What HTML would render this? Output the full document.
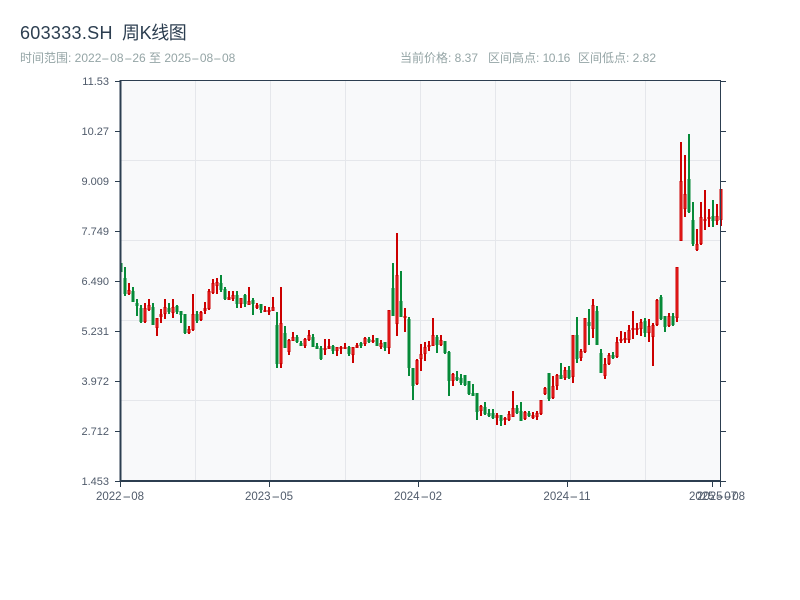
<!DOCTYPE html>
<html><head><meta charset="utf-8"><style>
html,body{margin:0;padding:0;background:#fff;width:800px;height:600px;overflow:hidden}
svg{position:absolute;left:0;top:0}
.t{position:absolute;white-space:pre;font-family:"Liberation Sans","WenQuanYi Zen Hei",sans-serif;line-height:14px}
.s{font-size:12px;color:#95a5a6;top:51px}
.s i{display:inline-block;font-style:normal;width:8.8px;text-align:center;transform:scaleX(2.1)}
.x{font-size:11.5px;color:#505b6b;top:490px;width:60px;text-align:center}
.x i{display:inline-block;font-style:normal;width:9.6px;text-align:center;transform:scaleX(2.3)}
.y{font-size:11px;color:#505b6b;left:49px;width:60px;text-align:right}
.h{font-size:18px;color:#2c3e50;top:23px;line-height:20px}
b{font-weight:normal;letter-spacing:-.6px}
</style></head><body>
<svg id="s" width="800" height="600" viewBox="0 0 800 600" xmlns="http://www.w3.org/2000/svg">
<rect x="121" y="81" width="599" height="400" fill="#f8f9fa"/>
<path d="M195.500 81V481M270.500 81V481M345.500 81V481M420.500 81V481M495.500 81V481M570.500 81V481M645.500 81V481M121 160.500H720M121 240.500H720M121 320.500H720M121 400.500H720" stroke="#e5e7eb" stroke-width="1" fill="none"/>
<g id="c"></g>
<path d="M120 80.500H720M720.500 80V481" stroke="#2c3e50" stroke-width="1" fill="none"/>
<path d="M120.500 80V482M120 481H721" stroke="#2c3e50" stroke-width="2" fill="none"/>
<path d="M115 81.500H120M115 131.500H120M115 181.500H120M115 231.500H120M115 281.500H120M115 331.500H120M115 381.500H120M115 431.500H120M115 481.500H120M721 81.500H726M721 131.500H726M721 181.500H726M721 231.500H726M721 281.500H726M721 331.500H726M721 381.500H726M721 431.500H726M721 481.500H726M120.500 482V487M269.500 482V487M418.500 482V487M567.500 482V487M712.500 482V487M720.500 482V487" stroke="#2c3e50" stroke-width="1" fill="none"/>
</svg>
<div class="t h" style="left:20px;letter-spacing:.3px">603333.SH</div>
<div class="t h" style="left:122px;letter-spacing:-.4px">周K线图</div>
<div class="t s" style="left:20px">时间范围: 2022<i>-</i>08<i>-</i>26 至 2025<i>-</i>08<i>-</i>08</div>
<div class="t s" style="left:400px">当前价格: 8.37</div>
<div class="t s" style="left:488px">区间高点: <b>10.16</b></div>
<div class="t s" style="left:578px">区间低点: 2.82</div>
<div class="t y" style="top:75px">11.53</div>
<div class="t y" style="top:125px">10.27</div>
<div class="t y" style="top:175px">9.009</div>
<div class="t y" style="top:225px">7.749</div>
<div class="t y" style="top:275px">6.490</div>
<div class="t y" style="top:325px">5.231</div>
<div class="t y" style="top:375px">3.972</div>
<div class="t y" style="top:425px">2.712</div>
<div class="t y" style="top:475px">1.453</div>
<div class="t x" style="left:90px">2022<i>-</i>08</div>
<div class="t x" style="left:239px">2023<i>-</i>05</div>
<div class="t x" style="left:388px">2024<i>-</i>02</div>
<div class="t x" style="left:537px">2024<i>-</i>11</div>
<div class="t x" style="left:683px">2025<i>-</i>07</div>
<div class="t x" style="left:691px">2025<i>-</i>08</div>
<script>
// g/r, wickTop, wickBottom, bodyTop, bodyBottom
var d="g263 272 263 272,g267 296 278 294,r283 295 290 294,g287 302 291 302,g299 316 303 306,g305 323 308 322,r303 323 308 322,r299 311 305 310,g303 325 307 325,r318 336 318 328,r309 323 314 317,r299 319 307 314,g303 314 308 312,r299 318 307 313,g305 314 306 312,g311 323 311 315,g314 334 314 333,r326 334 329 333,r294 331 314 330,g311 323 314 321,r311 321 312 320,r302 314 308 311,r289 310 291 309,r279 294 283 293,r278 294 282 286,g275 292 283 290,g287 300 289 299,r291 300 297 300,r291 301 295 299,g291 308 295 304,r298 308 298 304,g294 307 295 304,r287 305 301 305,g298 315 300 304,r303 309 305 308,g304 313 304 310,r306 312 310 312,r307 315 310 312,r297 311 307 311,g312 368 325 364,r287 368 323 364,g326 348 333 348,r339 355 340 352,r332 341 337 341,g335 343 337 342,g341 346 343 346,r338 348 339 346,r330 341 335 340,g334 347 337 347,g343 349 346 349,g346 360 348 359,r339 355 348 350,r339 349 346 349,g345 354 346 351,r347 356 347 351,r346 354 347 349,r343 349 347 349,g346 356 347 354,r347 363 347 355,r343 348 345 348,g342 348 343 346,r337 346 338 344,g337 343 339 342,r335 343 340 341,g338 346 338 346,r340 349 343 347,g342 351 342 348,r310 354 310 348,g263 316 288 316,r233 336 275 324,g271 317 301 317,r308 332 316 318,g317 376 319 368,g368 400 368 386,r359 385 360 384,r344 371 354 359,r342 361 347 354,r341 351 345 347,r318 346 335 346,g335 353 337 345,r335 346 340 345,g341 354 341 353,g351 396 352 381,r373 386 374 381,g371 381 377 380,g374 385 378 383,g375 386 375 385,g381 395 381 394,g384 396 393 396,g393 420 393 412,r405 416 406 411,g402 415 407 414,g409 417 413 416,g409 419 413 418,r413 425 415 418,g415 426 415 421,r417 425 418 420,r411 421 414 420,r391 417 408 417,g405 414 408 413,g402 421 411 421,r411 420 412 419,g411 417 413 416,r412 419 415 418,r411 420 413 417,r400 415 400 414,r387 395 388 394,g373 401 373 399,r376 399 386 398,r374 390 375 386,g363 379 375 379,r367 380 370 378,g366 379 370 378,r335 383 335 377,g317 363 335 359,r349 361 351 358,r318 353 318 352,g309 345 322 326,r299 338 305 329,g306 345 311 345,g349 373 353 373,r358 379 364 376,r353 365 355 364,g352 359 355 358,r337 358 342 357,r331 343 339 341,r332 343 338 340,r325 343 330 340,r311 339 328 330,r323 335 328 330,r319 336 322 329,g318 337 321 333,r319 342 326 333,r323 366 325 337,r299 326 300 325,g295 320 297 319,g316 332 316 327,r313 327 316 326,g313 326 316 325,r267 322 267 318,r142 241 181 241,r155 217 194 209,g134 213 179 212,g202 246 220 244,r229 251 244 250,r202 245 217 244,r190 230 219 221,r209 227 217 219,g200 227 216 221,r204 225 216 221,r189 226 189 220".split(",");
var h="";
d.forEach(function(e,i){
 var g=e[0]=="g",p=e.slice(1).split(" ").map(Number),x=Math.round(120+4*i),col=g?"#068a38":"#cc0000";
 h+='<rect x="'+x+'" y="'+p[0]+'" width="2" height="'+(p[1]-p[0])+'" fill="'+col+'"/>';
 var b=p[3]-p[2];if(b<2)b=2;
 h+='<rect x="'+(x-.5)+'" y="'+p[2]+'" width="3" height="'+b+'" fill="'+col+'"/>';
 if(!g&&b>3)h+='<rect x="'+(x+.5)+'" y="'+(p[2]+1)+'" width="1" height="'+(b-2)+'" fill="#f02a2a"/>';
});
document.getElementById("c").innerHTML=h;
</script>
</body></html>
